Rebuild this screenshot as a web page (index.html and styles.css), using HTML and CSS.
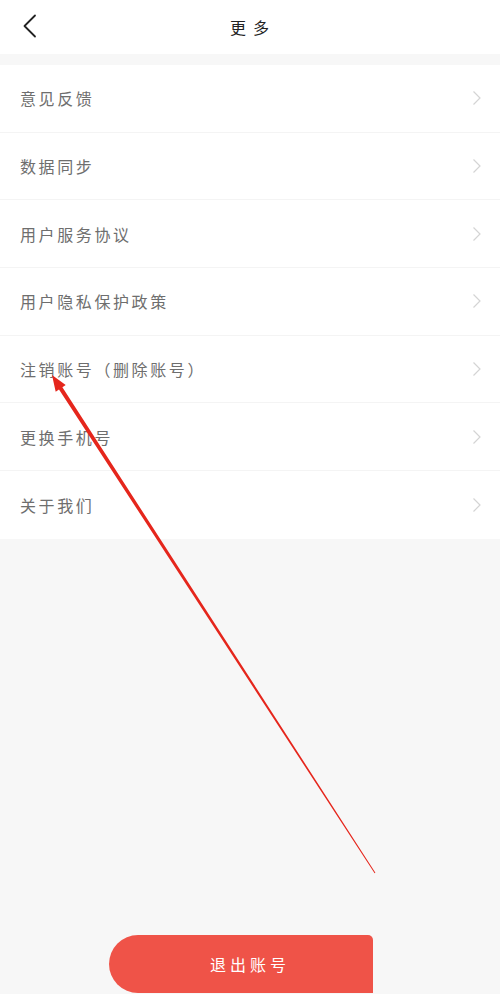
FILE: index.html
```html
<!DOCTYPE html>
<html lang="zh-CN">
<head>
<meta charset="utf-8">
<title>更多</title>
<link rel="stylesheet" href="styles.css">
</head>
<body>
<div class="page">
  <header class="topbar">
    <span class="back">
      <svg width="16" height="24" viewBox="0 0 16 24"><path d="M13 1.5 L2.5 12 L13 22.5" fill="none" stroke="#222" stroke-width="1.8" stroke-linecap="round" stroke-linejoin="round"/></svg>
    </span>
    <h1 class="title">更多</h1>
  </header>
  <ul class="list">
    <li class="row"><span class="label">意见反馈</span><span class="chev"><svg width="10" height="16" viewBox="0 0 10 16"><path d="M1.5 1.5 L8 8 L1.5 14.5" fill="none" stroke="#d4d4d4" stroke-width="1.2"/></svg></span></li>
    <li class="row"><span class="label">数据同步</span><span class="chev"><svg width="10" height="16" viewBox="0 0 10 16"><path d="M1.5 1.5 L8 8 L1.5 14.5" fill="none" stroke="#d4d4d4" stroke-width="1.2"/></svg></span></li>
    <li class="row"><span class="label">用户服务协议</span><span class="chev"><svg width="10" height="16" viewBox="0 0 10 16"><path d="M1.5 1.5 L8 8 L1.5 14.5" fill="none" stroke="#d4d4d4" stroke-width="1.2"/></svg></span></li>
    <li class="row"><span class="label">用户隐私保护政策</span><span class="chev"><svg width="10" height="16" viewBox="0 0 10 16"><path d="M1.5 1.5 L8 8 L1.5 14.5" fill="none" stroke="#d4d4d4" stroke-width="1.2"/></svg></span></li>
    <li class="row"><span class="label">注销账号（删除账号）</span><span class="chev"><svg width="10" height="16" viewBox="0 0 10 16"><path d="M1.5 1.5 L8 8 L1.5 14.5" fill="none" stroke="#d4d4d4" stroke-width="1.2"/></svg></span></li>
    <li class="row"><span class="label">更换手机号</span><span class="chev"><svg width="10" height="16" viewBox="0 0 10 16"><path d="M1.5 1.5 L8 8 L1.5 14.5" fill="none" stroke="#d4d4d4" stroke-width="1.2"/></svg></span></li>
    <li class="row"><span class="label">关于我们</span><span class="chev"><svg width="10" height="16" viewBox="0 0 10 16"><path d="M1.5 1.5 L8 8 L1.5 14.5" fill="none" stroke="#d4d4d4" stroke-width="1.2"/></svg></span></li>
  </ul>
  <div class="spacer"></div>
  <div class="logout">退出账号</div>
  <svg class="annot" width="500" height="994" viewBox="0 0 500 994">
    <polygon points="52,375 65.7,385.1 62.4,387.3 375.4,872.7 374.6,873.3 59,389.5 55.7,391.7" fill="#e5261c"/>
  </svg>
</div>
</body>
</html>
```

FILE: styles.css
```css
* { box-sizing: border-box; }
html, body { margin: 0; padding: 0; }
body {
  background: #f7f7f7;
  font-family: "Noto Sans CJK SC", "Noto Sans", sans-serif;
}
.page {
  position: relative;
  width: 500px;
  height: 994px;
  display: flex;
  flex-direction: column;
  overflow: hidden;
}
.topbar {
  height: 54px;
  background: #fff;
  display: flex;
  align-items: center;
  justify-content: center;
  position: relative;
}
.back {
  position: absolute;
  left: 22px;
  top: 14px;
  display: flex;
}
.title {
  margin: 0 0 0 6px;
  font-size: 16px;
  font-weight: 400;
  color: #222;
  letter-spacing: 7px;
}
.list {
  list-style: none;
  margin: 11px 0 0;
  padding: 0;
  background: #fff;
}
.row {
  height: 67.7px;
  display: flex;
  align-items: center;
  justify-content: space-between;
  padding: 0 18px 0 20px;
  border-bottom: 1px solid #f4f4f4;
}
.row:last-child { border-bottom: none; }
.label {
  font-size: 16px;
  color: #6e6e6e;
  letter-spacing: 2.6px;
}
.chev { display: flex; }
.spacer { flex: 1; }
.logout {
  width: 264px;
  height: 58px;
  margin: 0 0 1px 109px;
  padding-left: 18px;
  background: #ef5348;
  border-radius: 29px 5px 0 29px;
  color: #fff;
  font-size: 16px;
  letter-spacing: 4px;
  display: flex;
  align-items: center;
  justify-content: center;
}
.annot {
  position: absolute;
  left: 0;
  top: 0;
  pointer-events: none;
}
```
